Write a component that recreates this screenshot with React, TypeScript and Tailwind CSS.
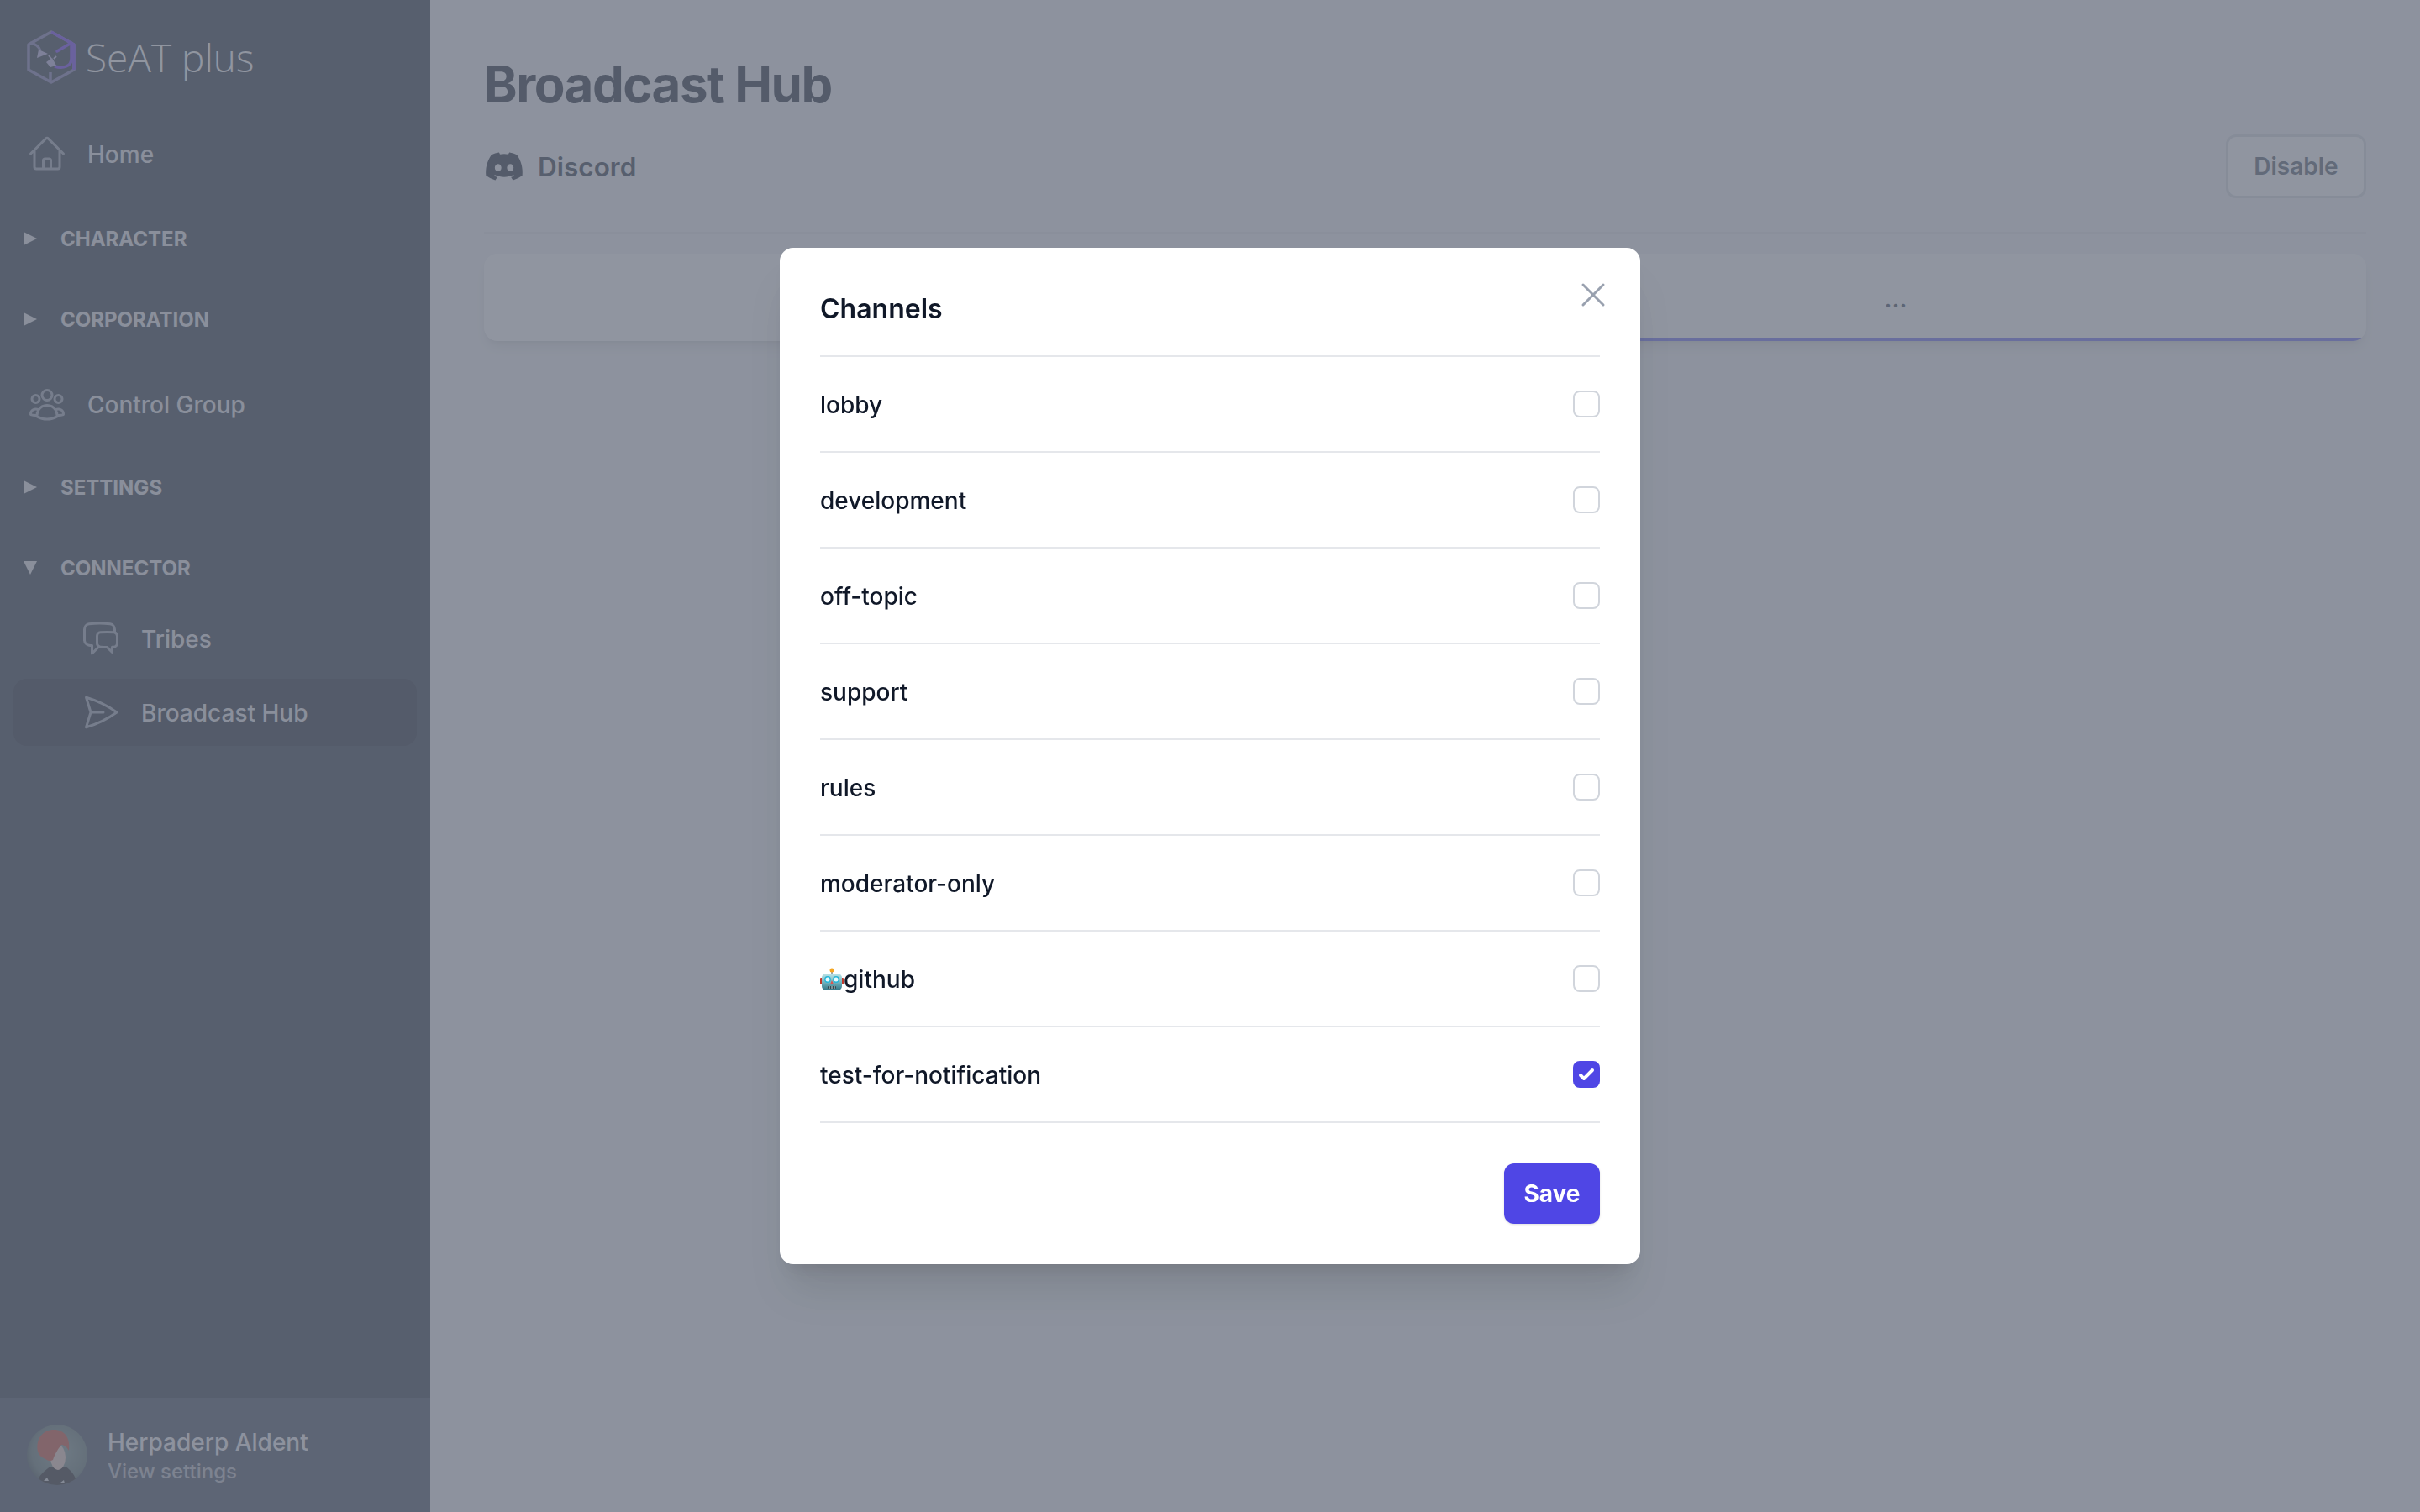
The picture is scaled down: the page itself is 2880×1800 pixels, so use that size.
import { FaDiscord } from 'react-icons/fa6'

const inter = { fontFamily: 'Inter, sans-serif' }

const channels = ['lobby', 'development', 'off-topic', 'support', 'rules', 'moderator-only', 'github', 'test-for-notification']

function Outline({ d, className }: { d: string; className: string }) {
  return (
    <svg viewBox="0 0 24 24" fill="none" stroke="currentColor" strokeWidth="1.5" strokeLinecap="round" strokeLinejoin="round" className={className}>
      <path d={d} />
    </svg>
  )
}

const homeIcon = 'M2.25 12l8.954-8.955c.44-.439 1.152-.439 1.591 0L21.75 12M4.5 9.75v10.125c0 .621.504 1.125 1.125 1.125H9.75v-4.875c0-.621.504-1.125 1.125-1.125h2.25c.621 0 1.125.504 1.125 1.125V21h4.125c.621 0 1.125-.504 1.125-1.125V9.75M8.25 21h8.25'
const groupIcon = 'M18 18.72a9.094 9.094 0 003.741-.479 3 3 0 00-4.682-2.72m.94 3.198l.001.031c0 .225-.012.447-.037.666A11.944 11.944 0 0112 21c-2.17 0-4.207-.576-5.963-1.584A6.062 6.062 0 016 18.719m12 0a5.971 5.971 0 00-.941-3.197m0 0A5.995 5.995 0 0012 12.75a5.995 5.995 0 00-5.058 2.772m0 0a3 3 0 00-4.681 2.72 8.986 8.986 0 003.74.477m.94-3.197a5.971 5.971 0 00-.94 3.197M15 6.75a3 3 0 11-6 0 3 3 0 016 0zm6 2.25a2.25 2.25 0 11-4.5 0 2.25 2.25 0 014.5 0zm-13.5 0a2.25 2.25 0 11-4.5 0 2.25 2.25 0 014.5 0z'
const chatIcon = 'M20.25 8.511c.884.284 1.5 1.128 1.5 2.097v4.286c0 1.136-.847 2.1-1.98 2.193-.34.027-.68.052-1.02.072v3.091l-3-3c-1.354 0-2.694-.055-4.02-.163a2.115 2.115 0 01-.825-.242m9.345-8.334a2.126 2.126 0 00-.476-.095 48.64 48.64 0 00-8.048 0c-1.131.094-1.976 1.057-1.976 2.192v4.286c0 .837.46 1.58 1.155 1.951m9.345-8.334V6.637c0-1.621-1.152-3.026-2.76-3.235A48.455 48.455 0 0011.25 3c-2.115 0-4.198.137-6.24.402-1.608.209-2.76 1.614-2.76 3.235v6.226c0 1.621 1.152 3.026 2.76 3.235.577.075 1.157.14 1.74.194V21l4.155-4.155'
const planeIcon = 'M6 12L3.269 3.126A59.768 59.768 0 0121.485 12 59.77 59.77 0 013.27 20.876L5.999 12zm0 0h7.5'

function Logo() {
  return (
    <svg viewBox="0 0 58 64" fill="none" className="w-[58px] h-[64px] shrink-0">
      <path d="M29 2 56 17V47L29 62 2 47V17Z" stroke="#7a74b0" strokeWidth="3.5" strokeLinejoin="round" />
      <path d="M29 2 56 17V47" stroke="#6832f8" strokeWidth="3.5" strokeLinejoin="round" />
      <path d="M4 15c5 1 10 4 12 9" stroke="#7a74b0" strokeWidth="3" />
      <path d="M12 33l2-10 11 5z" fill="#b8aee4" />
      <path d="M36 25l17-10" stroke="#6832f8" strokeWidth="3.5" strokeLinecap="round" />
      <path d="M33 43c10 3 20 0 20-9V17" stroke="#6832f8" strokeWidth="3.5" />
      <path d="M23 38l7-5 5 9-7 2z" fill="#b8aee4" />
      <path d="M29 34l-3-4M32 34l3-3" stroke="#b8aee4" strokeWidth="2" />
      <path d="M28 50v12" stroke="#7a74b0" strokeWidth="3.5" />
    </svg>
  )
}

function Caret({ open }: { open?: boolean }) {
  return (
    <svg viewBox="0 0 16 16" className="w-4 h-4 shrink-0 fill-[#e5e7eb]">
      <polygon points={open ? '0,0 16,0 8,16' : '0,0 16,8 0,16'} />
    </svg>
  )
}

function Group({ label, open }: { label: string; open?: boolean }) {
  return (
    <div className="flex items-center h-24 pl-7">
      <Caret open={open} />
      <span className="ml-7 pt-0.5 text-2xl font-[650] uppercase text-gray-200">{label}</span>
    </div>
  )
}

function NavLink({ icon, label }: { icon: string; label: string }) {
  return (
    <div className="flex items-center h-20 pl-8">
      <Outline d={icon} className="w-12 h-12 text-gray-400" />
      <span className="ml-6 pt-0.5 text-[28px] font-[550] text-gray-200">{label}</span>
    </div>
  )
}

function SubLink({ icon, label, active }: { icon: string; label: string; active?: boolean }) {
  return (
    <div className={`flex items-center h-20 pl-[80px] mx-4 rounded-2xl ${active ? 'bg-gray-900' : ''}`}>
      <Outline d={icon} className="w-12 h-12 text-gray-400" />
      <span className="ml-6 pt-0.5 text-[28px] font-[550] text-gray-200">{label}</span>
    </div>
  )
}

function Avatar() {
  return (
    <svg viewBox="0 0 72 72" className="w-[72px] h-[72px] rounded-full shrink-0">
      <defs>
        <radialGradient id="avatarBg" cx="0.55" cy="0.45" r="0.62">
          <stop offset="0" stopColor="#7a9490" />
          <stop offset="0.75" stopColor="#536b69" />
          <stop offset="1" stopColor="#2a3a3e" />
        </radialGradient>
      </defs>
      <rect width="72" height="72" fill="url(#avatarBg)" />
      <path d="M10 72C14 60 22 54 28 50H46C52 54 58 60 60 72Z" fill="#14161a" />
      <ellipse cx="37" cy="39" rx="9" ry="15" fill="#e8c8bc" />
      <path d="M13 32C10 16 20 6 32 6 45 6 52 16 50 31 47 26 44 24 41 24 38 28 34 33 31 42 28 44 25 43 22 41 17 39 14 36 13 32Z" fill="#c8402c" />
      <path d="M20 67l4-4 2 4zM40 69l4-3 1 4z" fill="#cfd4d8" />
    </svg>
  )
}

function Robot() {
  return (
    <svg viewBox="0 0 28 28" className="w-7 h-7 shrink-0">
      <defs>
        <linearGradient id="robotHead" x1="0" y1="0" x2="0" y2="1">
          <stop offset="0" stopColor="#bfe6ea" />
          <stop offset="0.55" stopColor="#6fb0bb" />
          <stop offset="1" stopColor="#2f7283" />
        </linearGradient>
      </defs>
      <rect x="0" y="12" width="3" height="8" rx="1" fill="#c0392b" />
      <rect x="25" y="12" width="3" height="8" rx="1" fill="#c0392b" />
      <rect x="13" y="3" width="2" height="6" fill="#9aa5ad" />
      <circle cx="14" cy="3" r="2.5" fill="#f5a623" />
      <rect x="2" y="7" width="24" height="20" rx="5" fill="url(#robotHead)" />
      <circle cx="9" cy="14" r="3.2" fill="#e6fbff" stroke="#26b5d8" strokeWidth="1.4" />
      <circle cx="19" cy="14" r="3.2" fill="#e6fbff" stroke="#26b5d8" strokeWidth="1.4" />
      <polygon points="14,15 16,20 12,20" fill="#d9534f" />
      <rect x="9" y="22" width="10" height="3" rx="1" fill="#2f4a52" />
      <path d="M11 22v3M14 22v3M17 22v3" stroke="#cfd8dc" strokeWidth="1" />
    </svg>
  )
}

function Sidebar() {
  return (
    <aside className="w-[512px] h-full flex flex-col shrink-0 bg-gray-800">
      <div className="flex-1">
        <div className="flex items-center h-[143px] pl-8 pb-[7px]">
          <Logo />
          <span className="ml-3 text-[46px] font-[350] text-white" style={{ fontFamily: '"Open Sans", sans-serif' }}>
            SeAT plus
          </span>
        </div>
        <NavLink icon={homeIcon} label="Home" />
        <div className="mt-[13px]">
          <Group label="Character" />
          <Group label="Corporation" />
        </div>
        <div className="mt-[13px]">
          <NavLink icon={groupIcon} label="Control Group" />
        </div>
        <div className="mt-[11px]">
          <Group label="Settings" />
          <Group label="Connector" open />
        </div>
        <div className="-mt-1 flex flex-col gap-2">
          <SubLink icon={chatIcon} label="Tribes" />
          <SubLink icon={planeIcon} label="Broadcast Hub" active />
        </div>
      </div>
      <div className="flex items-center h-[136px] pl-8 bg-gray-700">
        <Avatar />
        <div className="ml-6 pt-1 flex flex-col">
          <span className="text-[28px] leading-9 font-[550] text-gray-100">Herpaderp Aldent</span>
          <span className="text-2xl leading-[34px] font-[550] text-[#b4b6c0]">View settings</span>
        </div>
      </div>
    </aside>
  )
}

function Main() {
  return (
    <main className="flex-1 px-16 pt-16 bg-gray-100">
      <h1 className="text-[60px] leading-[72px] font-bold tracking-tight text-gray-900">Broadcast Hub</h1>
      <div className="mt-6 pb-10 flex items-center justify-between border-b-2 border-gray-200">
        <div className="flex items-center gap-4">
          <FaDiscord className="w-12 h-[38px] text-gray-900" />
          <span className="pt-0.5 text-[31.5px] font-semibold text-gray-800">Discord</span>
        </div>
        <button className="h-[76px] w-[167px] rounded-xl border-[3px] border-[#d6d9e0] bg-white text-[28px] font-semibold text-gray-600">Disable</button>
      </div>
      <div className="mt-6 h-[104px] grid grid-cols-2 rounded-2xl bg-white shadow-lg overflow-hidden">
        <div />
        <div className="flex items-center justify-center pt-2 border-b-4 border-[#6366f1] text-[28px] font-semibold text-gray-700">...</div>
      </div>
    </main>
  )
}

function ChannelRow({ name, checked }: { name: string; checked?: boolean }) {
  return (
    <div className="flex items-center justify-between h-[114px] border-b-2 border-gray-200">
      <span className="flex items-center pt-0.5 text-[28px] font-[550] text-gray-900">
        {name === 'github' && <Robot />}
        {name}
      </span>
      {checked ? (
        <span className="w-8 h-8 rounded-lg bg-[#4f46e5] flex items-center justify-center">
          <svg viewBox="0 0 16 16" className="w-8 h-8" fill="white">
            <path d="M12.207 4.793a1 1 0 0 1 0 1.414l-5 5a1 1 0 0 1-1.414 0l-2-2a1 1 0 0 1 1.414-1.414L6.5 9.086l4.293-4.293a1 1 0 0 1 1.414 0z" />
          </svg>
        </span>
      ) : (
        <span className="w-8 h-8 rounded-lg border-2 border-gray-300 bg-white" />
      )}
    </div>
  )
}

function ChannelsModal() {
  return (
    <div className="fixed inset-0 flex items-center justify-center bg-[#6b7280]/75">
      <div className="relative w-[1024px] h-[1210px] px-12 rounded-2xl bg-white shadow-[0_40px_50px_-10px_rgba(0,0,0,0.1),0_16px_20px_-12px_rgba(0,0,0,0.1)]">
        <button className="absolute top-8 right-8 text-gray-400">
          <svg viewBox="0 0 24 24" fill="none" stroke="currentColor" strokeWidth="1.5" strokeLinecap="round" strokeLinejoin="round" className="w-12 h-12">
            <path d="M6 18L18 6M6 6l12 12" />
          </svg>
        </button>
        <h2 className="h-[130px] pt-[49px] text-[32px] leading-12 font-[620] text-gray-900 border-b-2 border-gray-200">Channels</h2>
        {channels.map((name) => (
          <ChannelRow key={name} name={name} checked={name === 'test-for-notification'} />
        ))}
        <div className="mt-12 flex justify-end">
          <button className="h-[72px] w-[114px] rounded-xl bg-[#4f46e5] text-[28px] font-bold text-white shadow-sm">Save</button>
        </div>
      </div>
    </div>
  )
}

export default function App() {
  return (
    <div className="flex h-screen overflow-hidden" style={inter}>
      <Sidebar />
      <Main />
      <ChannelsModal />
    </div>
  )
}
